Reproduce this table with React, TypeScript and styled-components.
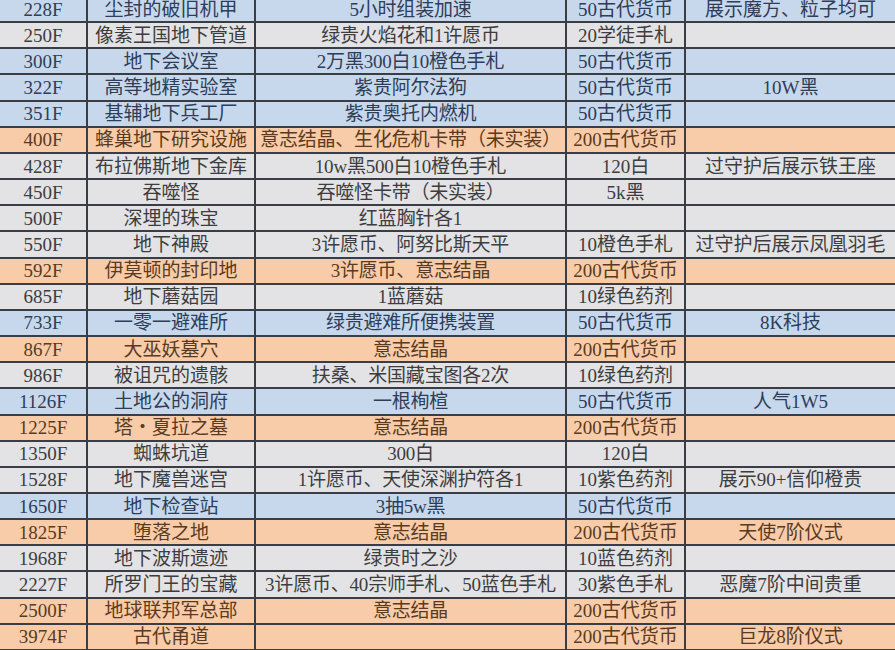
import React from "react";
import styled, { createGlobalStyle } from "styled-components";

type Tone = "blue" | "grey" | "orange";

type Row = {
  floor: string;
  place: string;
  reward: string;
  cost: string;
  note: string;
  tone: Tone;
};

const rows: Row[] = [
  { floor: "228F", place: "尘封的破旧机甲", reward: "5小时组装加速", cost: "50古代货币", note: "展示魔方、粒子均可", tone: "blue" },
  { floor: "250F", place: "像素王国地下管道", reward: "绿贵火焰花和1许愿币", cost: "20学徒手札", note: "", tone: "grey" },
  { floor: "300F", place: "地下会议室", reward: "2万黑300白10橙色手札", cost: "50古代货币", note: "", tone: "blue" },
  { floor: "322F", place: "高等地精实验室", reward: "紫贵阿尔法狗", cost: "50古代货币", note: "10W黑", tone: "blue" },
  { floor: "351F", place: "基辅地下兵工厂", reward: "紫贵奥托内燃机", cost: "50古代货币", note: "", tone: "blue" },
  { floor: "400F", place: "蜂巢地下研究设施", reward: "意志结晶、生化危机卡带（未实装）", cost: "200古代货币", note: "", tone: "orange" },
  { floor: "428F", place: "布拉佛斯地下金库", reward: "10w黑500白10橙色手札", cost: "120白", note: "过守护后展示铁王座", tone: "grey" },
  { floor: "450F", place: "吞噬怪", reward: "吞噬怪卡带（未实装）", cost: "5k黑", note: "", tone: "grey" },
  { floor: "500F", place: "深埋的珠宝", reward: "红蓝胸针各1", cost: "", note: "", tone: "grey" },
  { floor: "550F", place: "地下神殿", reward: "3许愿币、阿努比斯天平", cost: "10橙色手札", note: "过守护后展示凤凰羽毛", tone: "grey" },
  { floor: "592F", place: "伊莫顿的封印地", reward: "3许愿币、意志结晶", cost: "200古代货币", note: "", tone: "orange" },
  { floor: "685F", place: "地下蘑菇园", reward: "1蓝蘑菇", cost: "10绿色药剂", note: "", tone: "grey" },
  { floor: "733F", place: "一零一避难所", reward: "绿贵避难所便携装置", cost: "50古代货币", note: "8K科技", tone: "blue" },
  { floor: "867F", place: "大巫妖墓穴", reward: "意志结晶", cost: "200古代货币", note: "", tone: "orange" },
  { floor: "986F", place: "被诅咒的遗骸", reward: "扶桑、米国藏宝图各2次", cost: "10绿色药剂", note: "", tone: "grey" },
  { floor: "1126F", place: "土地公的洞府", reward: "一根栒楦", cost: "50古代货币", note: "人气1W5", tone: "blue" },
  { floor: "1225F", place: "塔・夏拉之墓", reward: "意志结晶", cost: "200古代货币", note: "", tone: "orange" },
  { floor: "1350F", place: "蜘蛛坑道", reward: "300白", cost: "120白", note: "", tone: "grey" },
  { floor: "1528F", place: "地下魔兽迷宫", reward: "1许愿币、天使深渊护符各1", cost: "10紫色药剂", note: "展示90+信仰橙贵", tone: "grey" },
  { floor: "1650F", place: "地下检查站", reward: "3抽5w黑", cost: "50古代货币", note: "", tone: "blue" },
  { floor: "1825F", place: "堕落之地", reward: "意志结晶", cost: "200古代货币", note: "天使7阶仪式", tone: "orange" },
  { floor: "1968F", place: "地下波斯遗迹", reward: "绿贵时之沙", cost: "10蓝色药剂", note: "", tone: "grey" },
  { floor: "2227F", place: "所罗门王的宝藏", reward: "3许愿币、40宗师手札、50蓝色手札", cost: "30紫色手札", note: "恶魔7阶中间贵重", tone: "grey" },
  { floor: "2500F", place: "地球联邦军总部", reward: "意志结晶", cost: "200古代货币", note: "", tone: "orange" },
  { floor: "3974F", place: "古代甬道", reward: "", cost: "200古代货币", note: "巨龙8阶仪式", tone: "orange" },
];

const toneBg: Record<Tone, string> = {
  blue: "#c7d8ec",
  grey: "#e3e3e5",
  orange: "#f8cca8",
};

const toneText: Record<Tone, string> = {
  blue: "#2e3d58",
  grey: "#3d3d40",
  orange: "#5b3a22",
};

const GlobalStyle = createGlobalStyle`
  html, body {
    margin: 0;
    padding: 0;
    background: #e6e6e8;
    overflow: hidden;
  }
`;

function App() {
  return (
    <>
      <GlobalStyle />
      <Sheet>
        {rows.map(r => (
          <TableRow key={r.floor} $tone={r.tone}>
            <Cell>{r.floor}</Cell>
            <Cell>{r.place}</Cell>
            <Cell $tight>{r.reward}</Cell>
            <Cell>{r.cost}</Cell>
            <Cell>{r.note}</Cell>
          </TableRow>
        ))}
      </Sheet>
    </>
  );
}

export default App;

const Sheet = styled.div`
  display: flex;
  flex-direction: column;
  width: 895px;
  margin-top: -3px;
  font-family: "Liberation Serif", "Noto Sans CJK SC", serif;
  font-size: 19px;
`;

const TableRow = styled.div<{ $tone: Tone }>`
  display: grid;
  grid-template-columns: 88px 168px 311px 119px 209px;
  height: 26.17px;
  box-sizing: border-box;
  border-bottom: 2px solid #3a3d44;
  background: ${p => toneBg[p.$tone]};
  color: ${p => toneText[p.$tone]};
`;

const Cell = styled.div<{ $tight?: boolean }>`
  display: flex;
  align-items: center;
  justify-content: center;
  box-sizing: border-box;
  border-right: 2px solid #3a3d44;
  white-space: nowrap;
  overflow: hidden;
  line-height: 1;
  letter-spacing: ${p => (p.$tight ? "-0.2px" : "0")};

  &:last-child {
    border-right: none;
  }
`;
